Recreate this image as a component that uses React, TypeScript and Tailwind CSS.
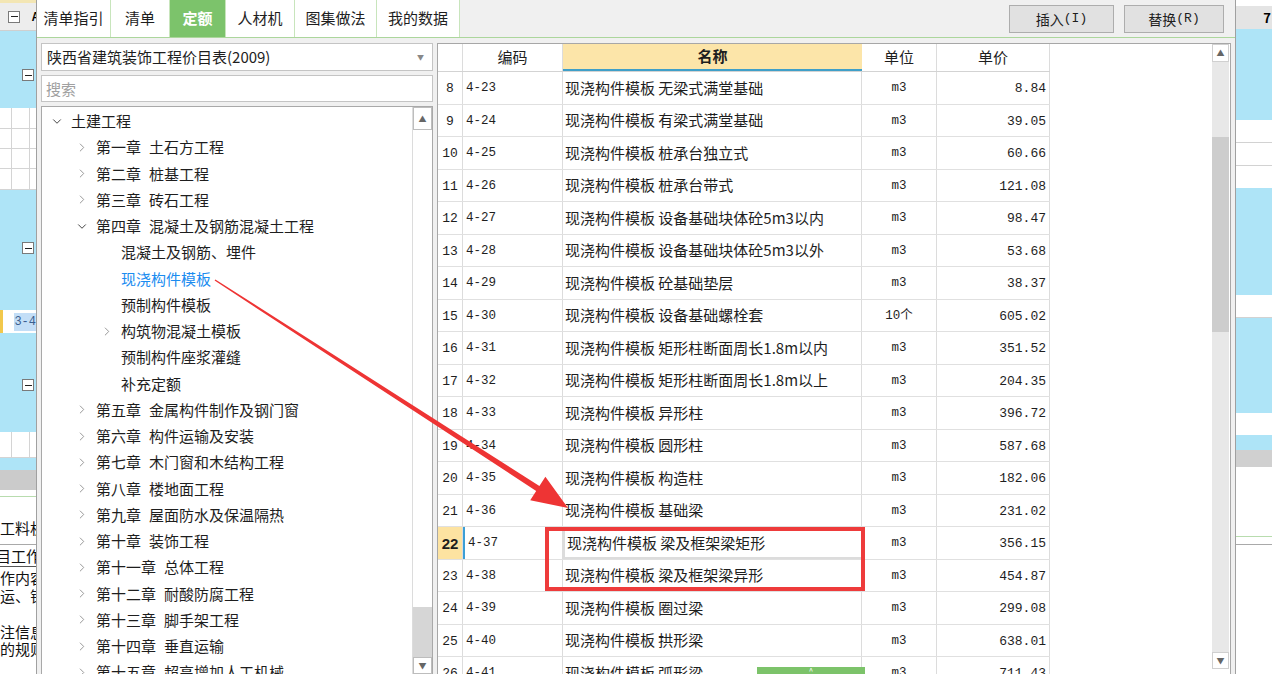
import React from "react";
import { ChevronRight, ChevronDown } from "lucide-react";

type Row = { n: number; code: string; name: string; unit: string; price: string };

const rows: Row[] = [
  { n: 8, code: "4-23", name: "现浇构件模板 无梁式满堂基础", unit: "m3", price: "8.84" },
  { n: 9, code: "4-24", name: "现浇构件模板 有梁式满堂基础", unit: "m3", price: "39.05" },
  { n: 10, code: "4-25", name: "现浇构件模板 桩承台独立式", unit: "m3", price: "60.66" },
  { n: 11, code: "4-26", name: "现浇构件模板 桩承台带式", unit: "m3", price: "121.08" },
  { n: 12, code: "4-27", name: "现浇构件模板 设备基础块体砼5m3以内", unit: "m3", price: "98.47" },
  { n: 13, code: "4-28", name: "现浇构件模板 设备基础块体砼5m3以外", unit: "m3", price: "53.68" },
  { n: 14, code: "4-29", name: "现浇构件模板 砼基础垫层", unit: "m3", price: "38.37" },
  { n: 15, code: "4-30", name: "现浇构件模板 设备基础螺栓套", unit: "10个", price: "605.02" },
  { n: 16, code: "4-31", name: "现浇构件模板 矩形柱断面周长1.8m以内", unit: "m3", price: "351.52" },
  { n: 17, code: "4-32", name: "现浇构件模板 矩形柱断面周长1.8m以上", unit: "m3", price: "204.35" },
  { n: 18, code: "4-33", name: "现浇构件模板 异形柱", unit: "m3", price: "396.72" },
  { n: 19, code: "4-34", name: "现浇构件模板 圆形柱", unit: "m3", price: "587.68" },
  { n: 20, code: "4-35", name: "现浇构件模板 构造柱", unit: "m3", price: "182.06" },
  { n: 21, code: "4-36", name: "现浇构件模板 基础梁", unit: "m3", price: "231.02" },
  { n: 22, code: "4-37", name: "现浇构件模板 梁及框架梁矩形", unit: "m3", price: "356.15" },
  { n: 23, code: "4-38", name: "现浇构件模板 梁及框架梁异形", unit: "m3", price: "454.87" },
  { n: 24, code: "4-39", name: "现浇构件模板 圈过梁", unit: "m3", price: "299.08" },
  { n: 25, code: "4-40", name: "现浇构件模板 拱形梁", unit: "m3", price: "638.01" },
  { n: 26, code: "4-41", name: "现浇构件模板 弧形梁", unit: "m3", price: "711.43" },
];

type Node = { l: number; a?: string; b?: string; c?: "down" | "right"; blue?: boolean };

const tree: Node[] = [
  { l: 0, a: "土建工程", c: "down" },
  { l: 1, a: "第一章", b: "土石方工程", c: "right" },
  { l: 1, a: "第二章", b: "桩基工程", c: "right" },
  { l: 1, a: "第三章", b: "砖石工程", c: "right" },
  { l: 1, a: "第四章", b: "混凝土及钢筋混凝土工程", c: "down" },
  { l: 2, a: "混凝土及钢筋、埋件" },
  { l: 2, a: "现浇构件模板", blue: true },
  { l: 2, a: "预制构件模板" },
  { l: 2, a: "构筑物混凝土模板", c: "right" },
  { l: 2, a: "预制构件座浆灌缝" },
  { l: 2, a: "补充定额" },
  { l: 1, a: "第五章", b: "金属构件制作及钢门窗", c: "right" },
  { l: 1, a: "第六章", b: "构件运输及安装", c: "right" },
  { l: 1, a: "第七章", b: "木门窗和木结构工程", c: "right" },
  { l: 1, a: "第八章", b: "楼地面工程", c: "right" },
  { l: 1, a: "第九章", b: "屋面防水及保温隔热", c: "right" },
  { l: 1, a: "第十章", b: "装饰工程", c: "right" },
  { l: 1, a: "第十一章", b: "总体工程", c: "right" },
  { l: 1, a: "第十二章", b: "耐酸防腐工程", c: "right" },
  { l: 1, a: "第十三章", b: "脚手架工程", c: "right" },
  { l: 1, a: "第十四章", b: "垂直运输", c: "right" },
  { l: 1, a: "第十五章", b: "超高增加人工机械", c: "right" },
];

const tabs = [
  { t: "清单指引", w: "w-[74px]" },
  { t: "清单", w: "w-[59px]" },
  { t: "定额", w: "w-[56px]", active: true },
  { t: "人材机", w: "w-[69px]" },
  { t: "图集做法", w: "w-[82px]" },
  { t: "我的数据", w: "w-[83px]" },
];

function Minus() {
  return (
    <div className="w-[12px] h-[12px] border border-[#7a7a7a] bg-white flex items-center justify-center">
      <div className="w-[7px] h-[1px] bg-[#222]" />
    </div>
  );
}

function GridRow({ h }: { h: string }) {
  return (
    <div className={`${h} flex border-b border-[#d4d4d4] bg-white`}>
      <div className="w-[12px] border-r border-[#d4d4d4]" />
      <div className="w-[18px] border-r border-[#d4d4d4]" />
      <div className="flex-1" />
    </div>
  );
}

function LeftStrip() {
  return (
    <div className="w-[36px] shrink-0 flex flex-col overflow-hidden bg-white">
      <div className="h-[3px] bg-[#f3e6b4]" />
      <div className="h-[28px] bg-[#ededed] border-b border-[#cfcfcf] flex items-center pl-[8px]">
        <Minus />
        <span className="ml-auto mr-[-3px] text-[11px] font-bold text-black">A</span>
      </div>
      <div className="h-[77px] bg-[#aee4f7] pt-[38px] flex justify-end pr-[2px]">
        <Minus />
      </div>
      <GridRow h="h-[21px]" />
      <GridRow h="h-[20px]" />
      <GridRow h="h-[20px]" />
      <GridRow h="h-[21px]" />
      <div className="h-[120px] bg-[#aee4f7] pt-[52px] flex justify-end pr-[2px]">
        <Minus />
      </div>
      <div className="h-[23px] bg-white flex items-center">
        <div className="w-[3px] h-full bg-[#f2c84b]" />
        <div className="w-[13px] h-full" />
        <div className="flex-1 h-[18px] bg-[#c3def7] text-[12px] leading-[18px] text-[#3b5f8f] font-['Liberation_Mono',monospace] whitespace-nowrap">
          3-4
        </div>
      </div>
      <div className="h-[99px] bg-[#aee4f7] pt-[46px] flex justify-end pr-[2px]">
        <Minus />
      </div>
      <GridRow h="h-[26px]" />
      <div className="h-[12px] bg-[#aee4f7]" />
      <div className="h-[20px] bg-[#cbcbcb]" />
      <div className="h-[7px] bg-white border-b border-[#b8dcae]" />
      <div className="h-[48px] flex items-end pb-[7px] border-b border-[#a9a9a9] text-[15px] leading-[18px] text-[#111] whitespace-nowrap">
        工料机
      </div>
      <div className="h-[22px] flex items-end pb-[1px] border-b border-[#555] text-[15px] leading-[18px] text-[#111] whitespace-nowrap">
        <span className="ml-[-19px]">项目工作</span>
      </div>
      <div className="pt-[2px] text-[15px] leading-[18px] text-[#111] whitespace-nowrap">
        <div className="ml-[-15px]">工作内容</div>
        <div>运、钳</div>
      </div>
      <div className="pt-[18px] text-[15px] leading-[17px] text-[#111] whitespace-nowrap">
        <div>注信息</div>
        <div>的规则</div>
      </div>
    </div>
  );
}

function RightStrip() {
  return (
    <div className="w-[36px] shrink-0 flex flex-col overflow-hidden bg-white">
      <div className="h-[6px] bg-white" />
      <div className="h-[23px] bg-[#e4e4e4] flex items-center justify-end pr-[1px] text-[13px] font-bold text-black">
        7
      </div>
      <div className="h-[91px] bg-[#aee4f7]" />
      <div className="h-[23px] bg-white border-b border-[#d2d2d2]" />
      <div className="h-[23px] bg-white border-b border-[#d2d2d2]" />
      <div className="h-[22px] bg-white" />
      <div className="h-[107px] bg-[#aee4f7]" />
      <div className="h-[23px] bg-white border-b border-[#d2d2d2]" />
      <div className="h-[95px] bg-[#aee4f7]" />
      <div className="h-[22px] bg-white" />
      <div className="h-[15px] bg-[#aee4f7]" />
      <div className="h-[17px] bg-[#d0d0d0]" />
      <div className="h-[70px] bg-white border-b border-[#b8dcae]" />
      <div className="h-[8px] bg-white border-b border-[#a9a9a9]" />
      <div className="flex-1 bg-white" />
    </div>
  );
}

function TreeRow({ node }: { node: Node }) {
  const pl = node.l === 0 ? "pl-[8px]" : node.l === 1 ? "pl-[33px]" : "pl-[58px]";
  return (
    <div className={`h-[26.25px] flex items-center ${pl} whitespace-nowrap`}>
      <div className="w-[14px] flex items-center justify-center">
        {node.c === "down" && <ChevronDown size={15} strokeWidth={1.7} color="#444" />}
        {node.c === "right" && <ChevronRight size={15} strokeWidth={1.5} color="#8a8a8a" />}
      </div>
      <div className={`ml-[7px] text-[15px] leading-[20px] ${node.blue ? "text-[#1a8cf0]" : "text-[#1e1e1e]"}`}>
        {node.a}
        {node.b && <span className="ml-[8px]">{node.b}</span>}
      </div>
    </div>
  );
}

function LeftPanel() {
  return (
    <div className="w-[392px] shrink-0 flex flex-col">
      <div className="h-[28px] bg-white border border-[#c4c4c4] flex items-center pl-[5px] pr-[8px]">
        <span className="text-[15px] leading-[20px] text-[#1e1e1e] whitespace-nowrap">陕西省建筑装饰工程价目表(2009)</span>
        <span className="ml-auto text-[7px] text-[#888]">▼</span>
      </div>
      <div className="mt-[4px] h-[27px] bg-white border border-[#c4c4c4] flex items-center pl-[4px]">
        <span className="text-[15px] leading-[20px] text-[#a0a0a0]">搜索</span>
      </div>
      <div className="mt-[4px] h-[600px] bg-white border border-[#a9a9a9] flex">
        <div className="flex-1 flex flex-col pt-[1px] overflow-hidden">
          {tree.map((n, i) => (
            <TreeRow key={i} node={n} />
          ))}
        </div>
        <div className="w-[20px] flex flex-col border-l border-[#dcdcdc] bg-white">
          <div className="h-[23px] border border-[#bdbdbd] bg-white flex items-center justify-center text-[8px] text-[#666]">
            ▲
          </div>
          <div className="h-[477px]" />
          <div className="h-[50px] bg-[#d6d6d6]" />
          <div className="h-[17px] border border-[#bdbdbd] bg-white flex items-center justify-center text-[8px] text-[#666]">
            ▼
          </div>
        </div>
      </div>
    </div>
  );
}

const mono = "font-['Liberation_Mono','Noto_Sans_CJK_SC',monospace]";

function Table() {
  return (
    <div className="w-[794px] shrink-0 h-[700px] bg-white border border-[#a7a7a7] flex">
      <div className="w-[612px] shrink-0 flex flex-col">
        <div className="h-[28px] shrink-0 flex border-b border-[#d3d3d3] text-[15px] text-[#1e1e1e]">
          <div className="w-[25px] border-r border-[#dcdcdc]" />
          <div className="w-[100px] border-r border-[#dcdcdc] flex items-center justify-center">编码</div>
          <div className="w-[299px] bg-[#fce5a9] border-b-2 border-[#3f9fc8] flex items-center justify-center font-bold">
            名称
          </div>
          <div className="w-[75px] border-r border-[#dcdcdc] flex items-center justify-center">单位</div>
          <div className="w-[113px] border-r border-[#dcdcdc] flex items-center justify-center">单价</div>
        </div>
        {rows.map((r) => {
          const sel = r.n === 22;
          return (
            <div key={r.n} className="h-[32.5px] shrink-0 flex border-b border-[#e0e0e0] text-[#1e1e1e]">
              <div
                className={`w-[25px] border-r border-[#dcdcdc] flex items-center justify-center pt-[2px] ${mono} text-[13px] ${
                  sel ? "bg-[#fde3a1] font-bold text-[15px] font-['Liberation_Sans',sans-serif]" : ""
                }`}
              >
                {r.n}
              </div>
              <div
                className={`w-[100px] border-r border-[#dcdcdc] flex items-center pl-[3px] pt-[2px] ${mono} text-[12.5px] ${
                  sel ? "border-l-2 border-l-[#3c9fd6] pl-[1px]" : ""
                }`}
              >
                {r.code}
              </div>
              <div
                className={`w-[299px] border-r border-[#dcdcdc] flex items-center pl-[2px] text-[15px] whitespace-nowrap ${
                  sel ? "border-2 border-[#4aa3d6] pl-[1px]" : ""
                }`}
              >
                {r.name}
              </div>
              <div className={`w-[75px] border-r border-[#dcdcdc] flex items-center justify-center pt-[2px] ${mono} text-[12.5px]`}>
                {r.unit}
              </div>
              <div className={`w-[113px] border-r border-[#dcdcdc] flex items-center justify-end pr-[3px] pt-[2px] ${mono} text-[13px]`}>
                {r.price}
              </div>
            </div>
          );
        })}
      </div>
      <div className="flex-1 bg-white" />
      <div className="w-[17px] h-[625px] shrink-0 flex flex-col bg-[#e8e8e8]">
        <div className="h-[18px] bg-white border border-[#d0d0d0] flex items-center justify-center text-[8px] text-[#666]">
          ▲
        </div>
        <div className="h-[75px]" />
        <div className="h-[195px] bg-[#cdcdcd]" />
        <div className="flex-1" />
        <div className="h-[17px] bg-white border border-[#d0d0d0] flex items-center justify-center text-[8px] text-[#666]">
          ▼
        </div>
      </div>
      <div className="w-[1px] shrink-0" />
    </div>
  );
}

function Dialog() {
  return (
    <div className="w-[1200px] shrink-0 h-full bg-[#f0f0f0] border-l border-r border-[#a0a0a0] flex flex-col">
      <div className="h-[38px] shrink-0 flex border-b border-[#acd69c] bg-[#f0f0f0]">
        {tabs.map((t) => (
          <div
            key={t.t}
            className={`${t.w} h-[37px] flex items-center justify-center text-[15px] border-r border-[#c8e5bc] ${
              t.active ? "bg-[#7cc36b] text-white font-bold" : "bg-white text-[#1e1e1e]"
            }`}
          >
            {t.t}
          </div>
        ))}
        <div className="flex-1" />
        <div className="flex gap-[10px] pt-[5px] pr-[11px]">
          <div className="w-[105px] h-[28px] bg-[#e1e1e1] border border-[#adadad] flex items-center justify-center text-[14px] text-[#1e1e1e]">
            插入<span className={`${mono} text-[13px]`}>(I)</span>
          </div>
          <div className="w-[100px] h-[28px] bg-[#e1e1e1] border border-[#adadad] flex items-center justify-center text-[14px] text-[#1e1e1e]">
            替换<span className={`${mono} text-[13px]`}>(R)</span>
          </div>
        </div>
      </div>
      <div className="flex pt-[5px] pl-[4px] gap-[4px]">
        <LeftPanel />
        <Table />
      </div>
    </div>
  );
}

export default function App() {
  return (
    <div className="relative w-[1272px] h-[674px] overflow-hidden flex bg-white font-['Noto_Sans_CJK_SC',sans-serif]">
      <LeftStrip />
      <Dialog />
      <RightStrip />
      <div className="absolute left-[545px] top-[527px] w-[320px] h-[64px] border-[4px] border-[#ee3b3b] pointer-events-none" />
      <div className="absolute left-[757px] top-[667px] w-[108px] h-[8px] bg-[#7cc36a] flex justify-center">
        <span className="text-[8px] leading-[8px] text-white">^</span>
      </div>
      <svg className="absolute left-0 top-0 pointer-events-none" width="1272" height="674" viewBox="0 0 1272 674">
        <polygon
          points="214.6,280.6 536.2,491.0 530.2,500.3 568,508 545.4,476.7 539.4,486.0 215.4,279.4"
          fill="#ee3434"
        />
      </svg>
    </div>
  );
}
